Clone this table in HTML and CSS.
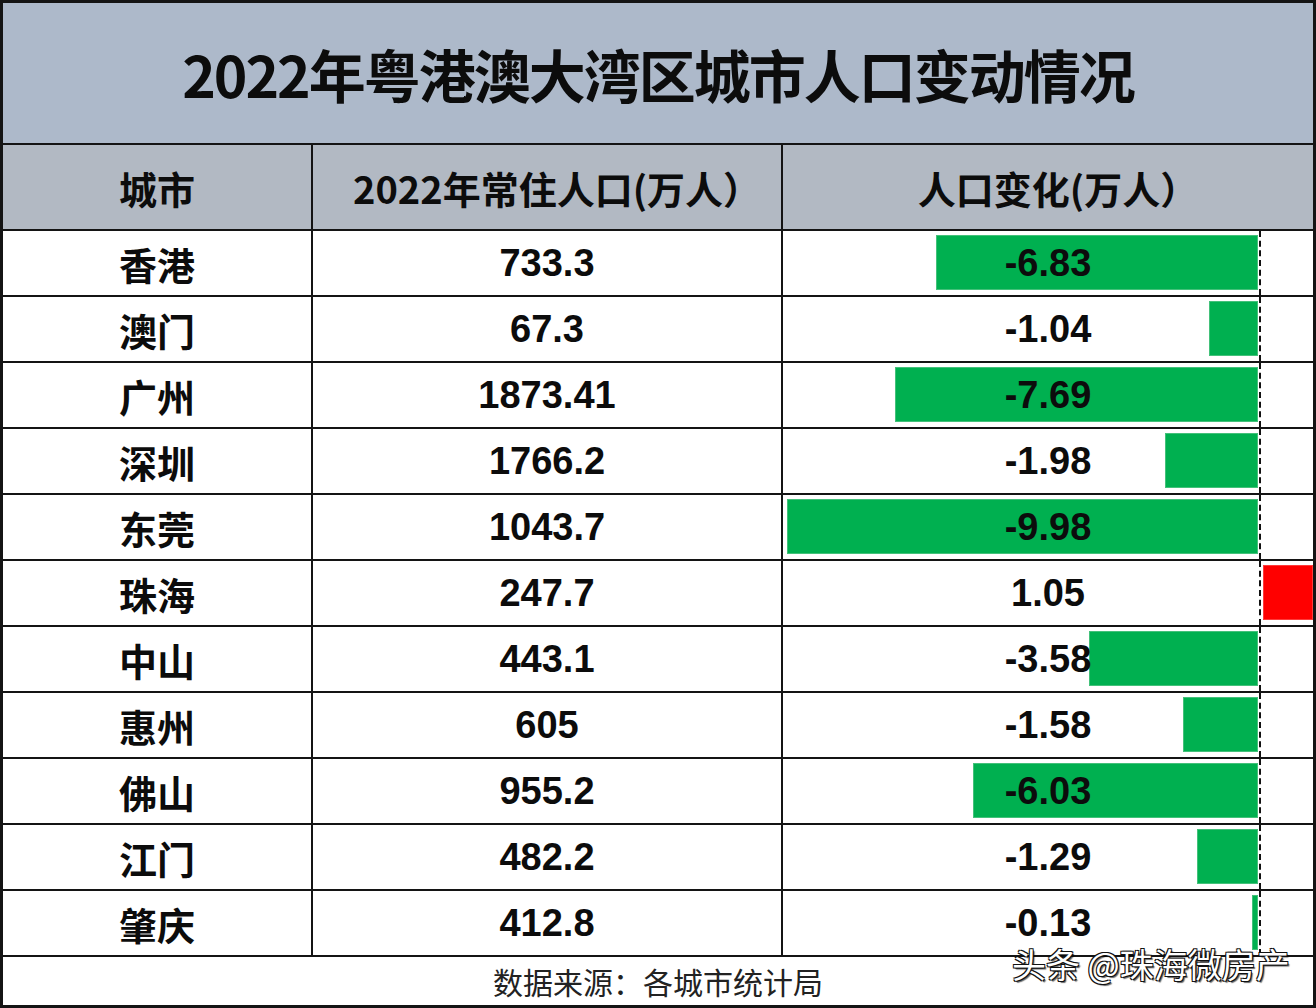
FILE: index.html
```html
<!DOCTYPE html>
<html lang="zh-CN">
<head>
<meta charset="utf-8">
<title>2022年粤港澳大湾区城市人口变动情况</title>
<link rel="stylesheet" href="styles.css">
</head>
<body>
<div class="sheet">
  <div class="title">2022年粤港澳大湾区城市人口变动情况</div>
  <div class="table">
    <div class="cell head">城市</div>
    <div class="cell head paren">2022年常住人口(万人）</div>
    <div class="cell head paren last">人口变化(万人）</div>

    <div class="cell city">香港</div><div class="cell num">733.3</div>
    <div class="cell last bars"><div class="track"><div class="neg-area"><div class="bar neg" style="width:322px"></div></div><div class="axis"></div><div class="pos-area"></div></div><div class="label">-6.83</div></div>

    <div class="cell city">澳门</div><div class="cell num">67.3</div>
    <div class="cell last bars"><div class="track"><div class="neg-area"><div class="bar neg" style="width:49px"></div></div><div class="axis"></div><div class="pos-area"></div></div><div class="label">-1.04</div></div>

    <div class="cell city">广州</div><div class="cell num">1873.41</div>
    <div class="cell last bars"><div class="track"><div class="neg-area"><div class="bar neg" style="width:363px"></div></div><div class="axis"></div><div class="pos-area"></div></div><div class="label">-7.69</div></div>

    <div class="cell city">深圳</div><div class="cell num">1766.2</div>
    <div class="cell last bars"><div class="track"><div class="neg-area"><div class="bar neg" style="width:93px"></div></div><div class="axis"></div><div class="pos-area"></div></div><div class="label">-1.98</div></div>

    <div class="cell city">东莞</div><div class="cell num">1043.7</div>
    <div class="cell last bars"><div class="track"><div class="neg-area"><div class="bar neg" style="width:471px"></div></div><div class="axis"></div><div class="pos-area"></div></div><div class="label">-9.98</div></div>

    <div class="cell city">珠海</div><div class="cell num">247.7</div>
    <div class="cell last bars"><div class="track"><div class="neg-area"></div><div class="axis"></div><div class="pos-area"><div class="bar pos" style="width:50px"></div></div></div><div class="label">1.05</div></div>

    <div class="cell city">中山</div><div class="cell num">443.1</div>
    <div class="cell last bars"><div class="track"><div class="neg-area"><div class="bar neg" style="width:169px"></div></div><div class="axis"></div><div class="pos-area"></div></div><div class="label">-3.58</div></div>

    <div class="cell city">惠州</div><div class="cell num">605</div>
    <div class="cell last bars"><div class="track"><div class="neg-area"><div class="bar neg" style="width:75px"></div></div><div class="axis"></div><div class="pos-area"></div></div><div class="label">-1.58</div></div>

    <div class="cell city">佛山</div><div class="cell num">955.2</div>
    <div class="cell last bars"><div class="track"><div class="neg-area"><div class="bar neg" style="width:285px"></div></div><div class="axis"></div><div class="pos-area"></div></div><div class="label">-6.03</div></div>

    <div class="cell city">江门</div><div class="cell num">482.2</div>
    <div class="cell last bars"><div class="track"><div class="neg-area"><div class="bar neg" style="width:61px"></div></div><div class="axis"></div><div class="pos-area"></div></div><div class="label">-1.29</div></div>

    <div class="cell city">肇庆</div><div class="cell num">412.8</div>
    <div class="cell last bars"><div class="track"><div class="neg-area"><div class="bar neg" style="width:6px"></div></div><div class="axis"></div><div class="pos-area"></div></div><div class="label">-0.13</div></div>
  </div>
  <div class="footer">数据来源：各城市统计局</div>
  <div class="watermark">头条 @珠海微房产</div>
</div>
</body>
</html>
```
FILE: styles.css
```css
html, body {
  margin: 0;
  padding: 0;
  background: #ffffff;
}

.sheet {
  position: relative;
  width: 1316px;
  height: 1008px;
  box-sizing: border-box;
  border: 3px solid #141414;
  display: flex;
  flex-direction: column;
  font-family: "Noto Sans CJK SC", "Liberation Sans", sans-serif;
  color: #0c0c0c;
  background: #ffffff;
}

.title {
  height: 142px;
  box-sizing: border-box;
  border-bottom: 2px solid #141414;
  background: #adb9ca;
  display: flex;
  align-items: center;
  justify-content: center;
  font-size: 57px;
  font-weight: 700;
  letter-spacing: -2px;
}

.table {
  display: grid;
  grid-template-columns: 310px 470px 1fr;
}

.cell {
  box-sizing: border-box;
  height: 66px;
  border-right: 2px solid #141414;
  border-bottom: 2px solid #141414;
  display: flex;
  align-items: center;
  justify-content: center;
}

.cell.last {
  border-right: none;
}

.head {
  height: 86px;
  background: #b2b9c3;
  font-size: 38px;
  font-weight: 700;
}

.head.paren {
  padding-left: 20px;
}

.city {
  font-size: 38px;
  font-weight: 700;
}

.num {
  font-family: "Liberation Sans", "Noto Sans CJK SC", sans-serif;
  font-size: 38px;
  font-weight: 700;
}

.bars {
  display: grid;
  grid-template-columns: 1fr;
  grid-template-rows: 1fr;
  justify-content: stretch;
  align-content: stretch;
  align-items: stretch;
  justify-items: stretch;
}

.bars > .track,
.bars > .label {
  grid-area: 1 / 1;
}

.track {
  display: grid;
  grid-template-columns: 476px 3px 1fr;
  height: 64px;
}

.neg-area {
  display: flex;
  justify-content: flex-end;
}

.pos-area {
  display: flex;
  justify-content: flex-start;
  padding-left: 1px;
}

.axis {
  border-left: 2px dashed #111111;
}

.bar {
  box-sizing: border-box;
  margin: 4px 0 5px 0;
}

.bar.neg {
  margin-right: 1px;
  background: #00b050;
  border: 1px solid #43c17a;
}

.bar.pos {
  background: #ff0000;
  border: 1px solid #ff3b3b;
}

.label {
  align-self: center;
  justify-self: center;
  font-family: "Liberation Sans", "Noto Sans CJK SC", sans-serif;
  font-size: 38px;
  font-weight: 700;
  color: #0c0c0c;
  position: relative;
}

.footer {
  flex: 1;
  display: flex;
  align-items: center;
  justify-content: center;
  font-size: 30px;
  color: #222222;
}

.watermark {
  position: absolute;
  left: 1009px;
  top: 936px;
  font-size: 34px;
  color: #ffffff;
  white-space: nowrap;
  text-shadow: 1px 1px 0 #111, -1px -1px 0 #111, 1px -1px 0 #111, -1px 1px 0 #111, 2px 2px 1px rgba(0,0,0,0.6);
}
```
